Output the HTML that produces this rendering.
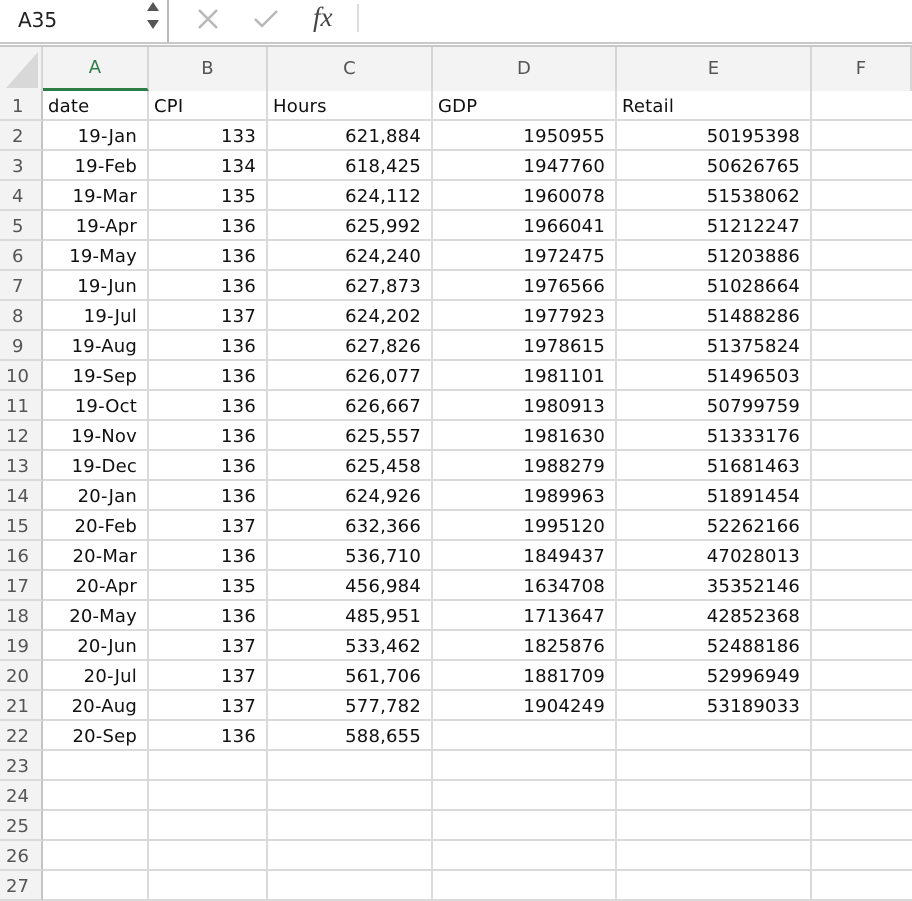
<!DOCTYPE html>
<html><head><meta charset="utf-8"><style>
*{margin:0;padding:0;box-sizing:border-box}
body{width:912px;height:894px;overflow:hidden;background:#fff;font-family:"DejaVu Sans",sans-serif;position:relative}
.top{position:absolute;left:0;top:0;width:912px;height:42px;background:#fff}
.l1{position:absolute;left:0;top:42px;width:912px;height:2px;background:#c8c8c8}
.l2{position:absolute;left:0;top:45px;width:912px;height:2px;background:#c8c8c8}
.hdr{position:absolute;left:0;top:47px;height:44px;width:912px;background:#f3f3f3;border-bottom:2px solid #cfcfcf}
.row{position:absolute;left:0;height:30px;width:912px;display:flex}
.c{height:30px;border-right:2px solid #dadada;border-bottom:2px solid #dadada;font-size:18px;letter-spacing:0.2px;line-height:31px;padding:0 10px 0 5px;white-space:nowrap;color:#111;overflow:hidden}
.n{width:43px;background:#f3f3f3;color:#555;border-right:2px solid #c4c4c4;padding-left:12px;border-bottom:2px solid #dadada;letter-spacing:0}
.a{width:106px}.b{width:119px}.cc{width:165px}.d{width:184px}.e{width:195px}.f{width:100px;border-right:none}
.r{text-align:right}
.hdr .c{height:44px;line-height:44px;text-align:center;color:#555;border-bottom:none;border-right:2px solid #d6d6d6;background:#f3f3f3;padding:0}
</style></head><body>
<div class="top">
<div style="position:absolute;left:18px;top:8px;font-size:20px;color:#222">A35</div>
<svg style="position:absolute;left:142px;top:0" width="22" height="42"><polygon points="5,11 17,11 11,2" fill="#555"/><polygon points="5,20 17,20 11,29" fill="#555"/></svg>
<div style="position:absolute;left:167px;top:0;width:2px;height:42px;background:#bbb"></div>
<svg style="position:absolute;left:196px;top:7px" width="24" height="24"><path d="M3 3L21 21M21 3L3 21" stroke="#b8b8b8" stroke-width="2.5"/></svg>
<svg style="position:absolute;left:252px;top:7px" width="28" height="24"><path d="M3 12L10 19L25 4" stroke="#b8b8b8" stroke-width="2.5" fill="none"/></svg>
<div style="position:absolute;left:313px;top:2px;font-family:'Liberation Serif',serif;font-style:italic;font-size:27px;color:#444">fx</div>
<div style="position:absolute;left:357px;top:4px;width:2px;height:28px;background:#ddd"></div>
</div>
<div class="l1"></div><div class="l2"></div>
<div class="hdr"><div style="display:flex">
<div class="c n" style="background:#f3f3f3;padding:0;position:relative"><svg width="41" height="44" style="position:absolute;left:0;top:0"><polygon points="38,5 38,41 6,41" fill="#d8d8d8"/></svg></div>
<div class="c a" style="color:#2e7d46;border-bottom:3px solid #2e7d46;height:44px;line-height:42px">A</div><div class="c b">B</div><div class="c cc">C</div><div class="c d">D</div><div class="c e">E</div><div class="c f">F</div>
</div></div>

<div class="row" style="top:91px"><div class="c n">1</div><div class="c a">date</div><div class="c b">CPI</div><div class="c cc">Hours</div><div class="c d">GDP</div><div class="c e">Retail</div><div class="c f"></div></div>
<div class="row" style="top:121px"><div class="c n">2</div><div class="c a r">19-Jan</div><div class="c b r">133</div><div class="c cc r">621,884</div><div class="c d r">1950955</div><div class="c e r">50195398</div><div class="c f"></div></div>
<div class="row" style="top:151px"><div class="c n">3</div><div class="c a r">19-Feb</div><div class="c b r">134</div><div class="c cc r">618,425</div><div class="c d r">1947760</div><div class="c e r">50626765</div><div class="c f"></div></div>
<div class="row" style="top:181px"><div class="c n">4</div><div class="c a r">19-Mar</div><div class="c b r">135</div><div class="c cc r">624,112</div><div class="c d r">1960078</div><div class="c e r">51538062</div><div class="c f"></div></div>
<div class="row" style="top:211px"><div class="c n">5</div><div class="c a r">19-Apr</div><div class="c b r">136</div><div class="c cc r">625,992</div><div class="c d r">1966041</div><div class="c e r">51212247</div><div class="c f"></div></div>
<div class="row" style="top:241px"><div class="c n">6</div><div class="c a r">19-May</div><div class="c b r">136</div><div class="c cc r">624,240</div><div class="c d r">1972475</div><div class="c e r">51203886</div><div class="c f"></div></div>
<div class="row" style="top:271px"><div class="c n">7</div><div class="c a r">19-Jun</div><div class="c b r">136</div><div class="c cc r">627,873</div><div class="c d r">1976566</div><div class="c e r">51028664</div><div class="c f"></div></div>
<div class="row" style="top:301px"><div class="c n">8</div><div class="c a r">19-Jul</div><div class="c b r">137</div><div class="c cc r">624,202</div><div class="c d r">1977923</div><div class="c e r">51488286</div><div class="c f"></div></div>
<div class="row" style="top:331px"><div class="c n">9</div><div class="c a r">19-Aug</div><div class="c b r">136</div><div class="c cc r">627,826</div><div class="c d r">1978615</div><div class="c e r">51375824</div><div class="c f"></div></div>
<div class="row" style="top:361px"><div class="c n" style="padding-left:6px">10</div><div class="c a r">19-Sep</div><div class="c b r">136</div><div class="c cc r">626,077</div><div class="c d r">1981101</div><div class="c e r">51496503</div><div class="c f"></div></div>
<div class="row" style="top:391px"><div class="c n" style="padding-left:6px">11</div><div class="c a r">19-Oct</div><div class="c b r">136</div><div class="c cc r">626,667</div><div class="c d r">1980913</div><div class="c e r">50799759</div><div class="c f"></div></div>
<div class="row" style="top:421px"><div class="c n" style="padding-left:6px">12</div><div class="c a r">19-Nov</div><div class="c b r">136</div><div class="c cc r">625,557</div><div class="c d r">1981630</div><div class="c e r">51333176</div><div class="c f"></div></div>
<div class="row" style="top:451px"><div class="c n" style="padding-left:6px">13</div><div class="c a r">19-Dec</div><div class="c b r">136</div><div class="c cc r">625,458</div><div class="c d r">1988279</div><div class="c e r">51681463</div><div class="c f"></div></div>
<div class="row" style="top:481px"><div class="c n" style="padding-left:6px">14</div><div class="c a r">20-Jan</div><div class="c b r">136</div><div class="c cc r">624,926</div><div class="c d r">1989963</div><div class="c e r">51891454</div><div class="c f"></div></div>
<div class="row" style="top:511px"><div class="c n" style="padding-left:6px">15</div><div class="c a r">20-Feb</div><div class="c b r">137</div><div class="c cc r">632,366</div><div class="c d r">1995120</div><div class="c e r">52262166</div><div class="c f"></div></div>
<div class="row" style="top:541px"><div class="c n" style="padding-left:6px">16</div><div class="c a r">20-Mar</div><div class="c b r">136</div><div class="c cc r">536,710</div><div class="c d r">1849437</div><div class="c e r">47028013</div><div class="c f"></div></div>
<div class="row" style="top:571px"><div class="c n" style="padding-left:6px">17</div><div class="c a r">20-Apr</div><div class="c b r">135</div><div class="c cc r">456,984</div><div class="c d r">1634708</div><div class="c e r">35352146</div><div class="c f"></div></div>
<div class="row" style="top:601px"><div class="c n" style="padding-left:6px">18</div><div class="c a r">20-May</div><div class="c b r">136</div><div class="c cc r">485,951</div><div class="c d r">1713647</div><div class="c e r">42852368</div><div class="c f"></div></div>
<div class="row" style="top:631px"><div class="c n" style="padding-left:6px">19</div><div class="c a r">20-Jun</div><div class="c b r">137</div><div class="c cc r">533,462</div><div class="c d r">1825876</div><div class="c e r">52488186</div><div class="c f"></div></div>
<div class="row" style="top:661px"><div class="c n" style="padding-left:6px">20</div><div class="c a r">20-Jul</div><div class="c b r">137</div><div class="c cc r">561,706</div><div class="c d r">1881709</div><div class="c e r">52996949</div><div class="c f"></div></div>
<div class="row" style="top:691px"><div class="c n" style="padding-left:6px">21</div><div class="c a r">20-Aug</div><div class="c b r">137</div><div class="c cc r">577,782</div><div class="c d r">1904249</div><div class="c e r">53189033</div><div class="c f"></div></div>
<div class="row" style="top:721px"><div class="c n" style="padding-left:6px">22</div><div class="c a r">20-Sep</div><div class="c b r">136</div><div class="c cc r">588,655</div><div class="c d r"></div><div class="c e r"></div><div class="c f"></div></div>
<div class="row" style="top:751px"><div class="c n" style="padding-left:6px">23</div><div class="c a"></div><div class="c b"></div><div class="c cc"></div><div class="c d"></div><div class="c e"></div><div class="c f"></div></div>
<div class="row" style="top:781px"><div class="c n" style="padding-left:6px">24</div><div class="c a"></div><div class="c b"></div><div class="c cc"></div><div class="c d"></div><div class="c e"></div><div class="c f"></div></div>
<div class="row" style="top:811px"><div class="c n" style="padding-left:6px">25</div><div class="c a"></div><div class="c b"></div><div class="c cc"></div><div class="c d"></div><div class="c e"></div><div class="c f"></div></div>
<div class="row" style="top:841px"><div class="c n" style="padding-left:6px">26</div><div class="c a"></div><div class="c b"></div><div class="c cc"></div><div class="c d"></div><div class="c e"></div><div class="c f"></div></div>
<div class="row" style="top:871px"><div class="c n" style="padding-left:6px">27</div><div class="c a"></div><div class="c b"></div><div class="c cc"></div><div class="c d"></div><div class="c e"></div><div class="c f"></div></div>
</body></html>
